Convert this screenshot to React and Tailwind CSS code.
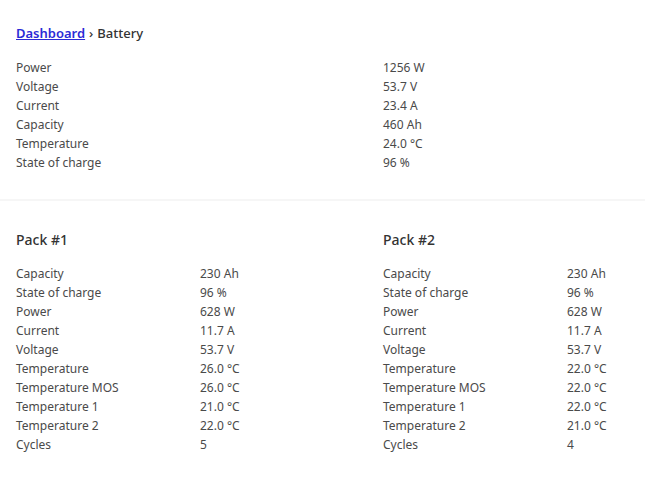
import React from 'react'

const summary = [
  ['Power', '1256 W'],
  ['Voltage', '53.7 V'],
  ['Current', '23.4 A'],
  ['Capacity', '460 Ah'],
  ['Temperature', '24.0 °C'],
  ['State of charge', '96 %'],
]

const packs = [
  {
    name: 'Pack #1',
    rows: [
      ['Capacity', '230 Ah'],
      ['State of charge', '96 %'],
      ['Power', '628 W'],
      ['Current', '11.7 A'],
      ['Voltage', '53.7 V'],
      ['Temperature', '26.0 °C'],
      ['Temperature MOS', '26.0 °C'],
      ['Temperature 1', '21.0 °C'],
      ['Temperature 2', '22.0 °C'],
      ['Cycles', '5'],
    ],
  },
  {
    name: 'Pack #2',
    rows: [
      ['Capacity', '230 Ah'],
      ['State of charge', '96 %'],
      ['Power', '628 W'],
      ['Current', '11.7 A'],
      ['Voltage', '53.7 V'],
      ['Temperature', '22.0 °C'],
      ['Temperature MOS', '22.0 °C'],
      ['Temperature 1', '22.0 °C'],
      ['Temperature 2', '21.0 °C'],
      ['Cycles', '4'],
    ],
  },
]

function Row({ label, value, labelWidth }) {
  return (
    <div className="flex leading-[19px]">
      <div className={labelWidth}>{label}</div>
      <div>{value}</div>
    </div>
  )
}

export default function App() {
  return (
    <div className="min-h-screen overflow-hidden bg-white text-[12px] text-[#4a4a4a]" style={{ fontFamily: '"Noto Sans", sans-serif' }}>
      <div className="px-4 pt-6">
        <div className="text-[13px] font-medium leading-[18px] text-[#333]">
          <a href="#" className="font-semibold text-[#2b2bd6] underline">Dashboard</a>
          <span className="mx-1">›</span>
          <span>Battery</span>
        </div>

        <div className="mt-4">
          {summary.map(([label, value]) => (
            <Row key={label} label={label} value={value} labelWidth="w-[367px] shrink-0" />
          ))}
        </div>
      </div>

      <div className="mt-[27px] h-[2px] bg-[#f6f6f6]" />

      <div className="flex px-4 pt-[29px]">
        {packs.map((pack) => (
          <div key={pack.name} className="w-[367px] shrink-0">
            <h2 className="text-[14px] font-medium leading-[20px] text-[#333]">{pack.name}</h2>
            <div className="mt-[14px]">
              {pack.rows.map(([label, value]) => (
                <Row key={label} label={label} value={value} labelWidth="w-[184px] shrink-0" />
              ))}
            </div>
          </div>
        ))}
      </div>
    </div>
  )
}
